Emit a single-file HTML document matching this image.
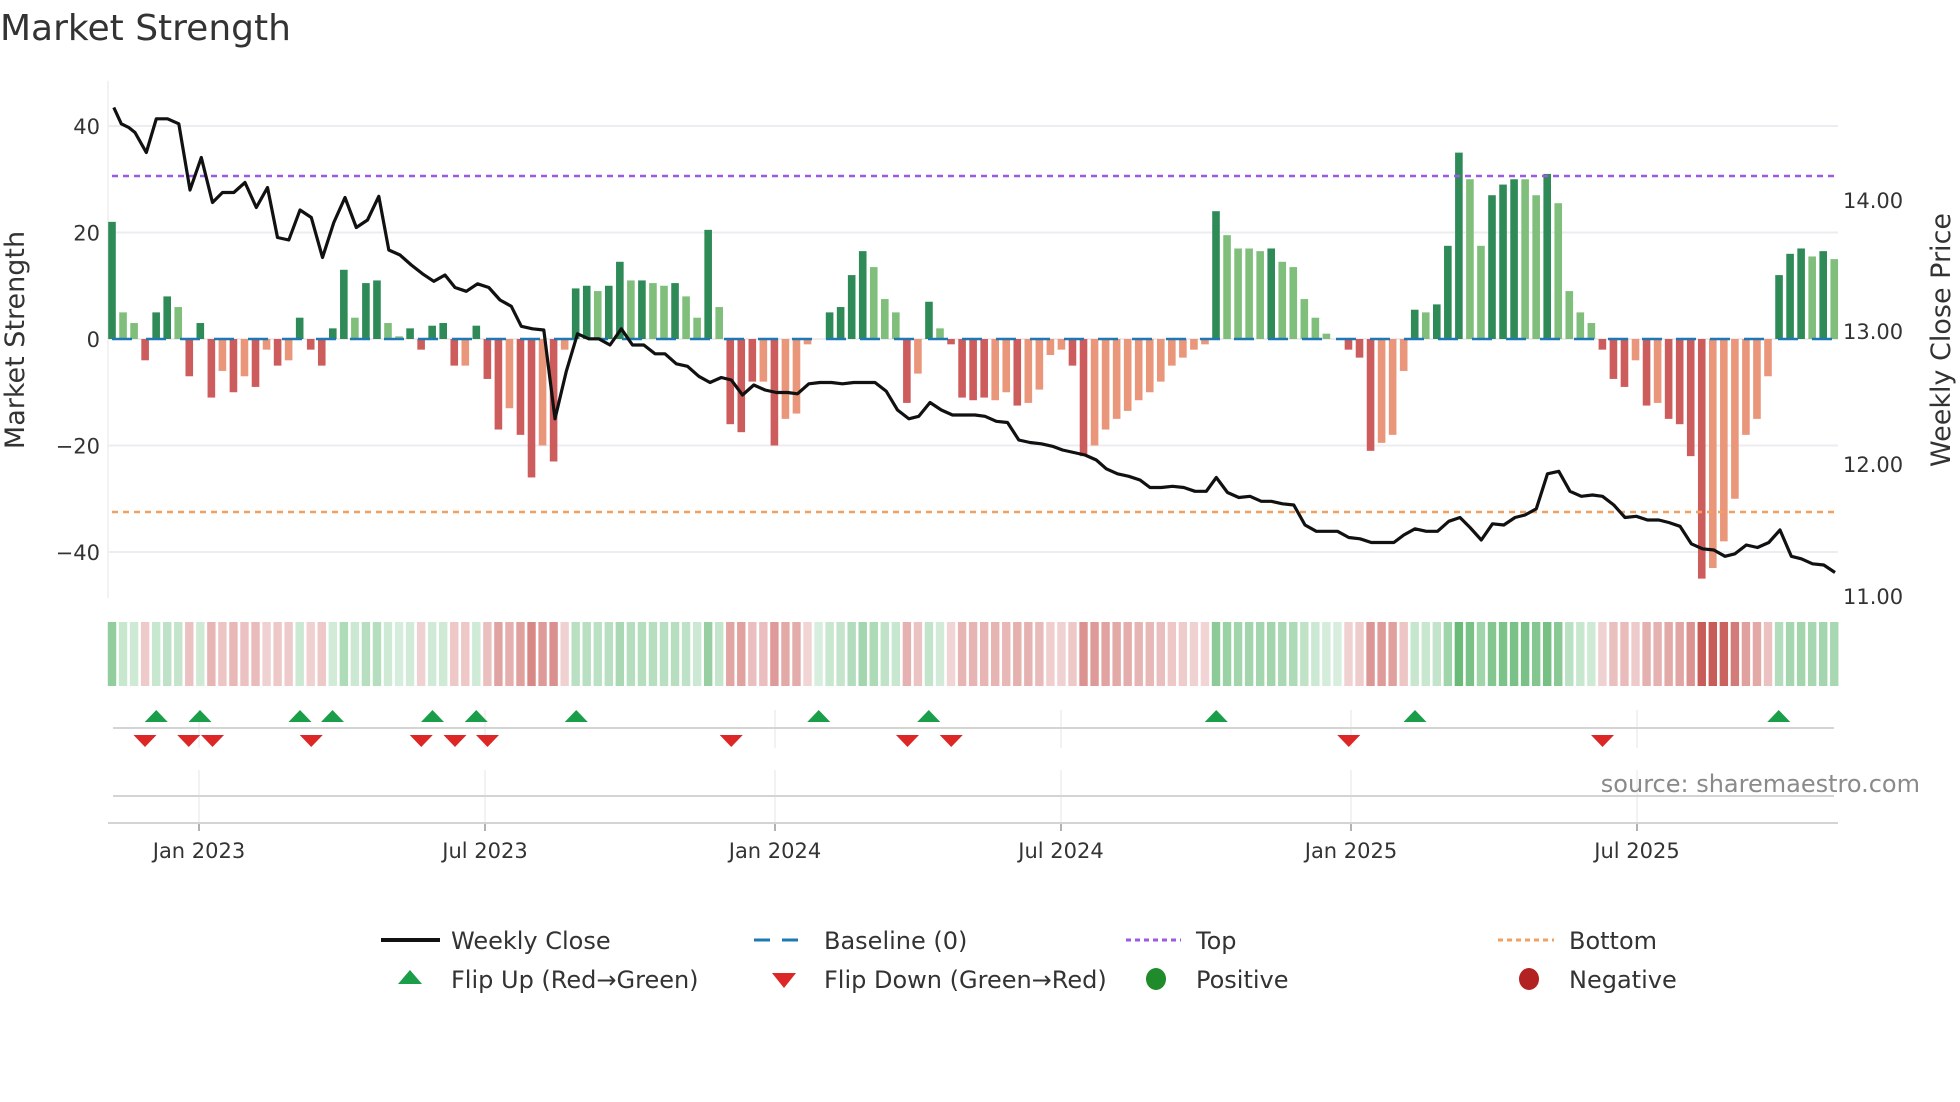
<!DOCTYPE html>
<html><head><meta charset="utf-8"><style>
html,body{margin:0;padding:0;background:#fff;width:1960px;height:1102px;overflow:hidden}
svg{display:block;font-family:"DejaVu Sans","Liberation Sans",sans-serif}
</style></head><body>
<svg id="s" width="1960" height="1102" viewBox="0 0 1960 1102" xmlns="http://www.w3.org/2000/svg">
<text x="0" y="40" font-size="36" fill="#333">Market Strength</text>
<g id="grid"></g>
<g id="bars"></g>
<g id="lines"></g>
<g id="strip"></g>
<g id="marks"></g>
<g id="axes" font-size="21" fill="#333"></g>
<text x="1920" y="792" font-size="24" fill="#8a8a8a" text-anchor="end">source: sharemaestro.com</text>
<g font-size="24" fill="#333">
<line x1="381" y1="940" x2="440" y2="940" stroke="#111" stroke-width="4"/>
<text x="451" y="949">Weekly Close</text>
<line x1="754" y1="940" x2="806" y2="940" stroke="#1f77b4" stroke-width="3" stroke-dasharray="16,12"/>
<text x="824" y="949">Baseline (0)</text>
<line x1="1126" y1="940" x2="1181" y2="940" stroke="#9b59e6" stroke-width="3" stroke-dasharray="5,4"/>
<text x="1196" y="949">Top</text>
<line x1="1498" y1="940" x2="1554" y2="940" stroke="#f0a060" stroke-width="3" stroke-dasharray="5,4"/>
<text x="1569" y="949">Bottom</text>
<polygon points="410,970 398,984 422,984" fill="#1a9e49"/>
<text x="451" y="988">Flip Up (Red→Green)</text>
<polygon points="772,973 796,973 784,988" fill="#dd2727"/>
<text x="824" y="988">Flip Down (Green→Red)</text>
<ellipse cx="1156" cy="979" rx="10" ry="11" fill="#208b2a"/>
<text x="1196" y="988">Positive</text>
<ellipse cx="1529" cy="979" rx="10" ry="11" fill="#b22222"/>
<text x="1569" y="988">Negative</text>
</g>
</svg>
<script>
var NS="http://www.w3.org/2000/svg";
function el(p,t,a,txt){var e=document.createElementNS(NS,t);for(var k in a)e.setAttribute(k,a[k]);if(txt!=null)e.textContent=txt;document.getElementById(p).appendChild(e);return e;}
var vals=[[22,1],[5,0],[3,0],[-4,1],[5,1],[8,1],[6,0],[-7,1],[3,1],[-11,1],[-6,0],[-10,1],[-7,0],[-9,1],[-2,0],[-5,1],[-4,0],[4,1],[-2,1],[-5,1],[2,1],[13,1],[4,0],[10.5,1],[11,1],[3,0],[0.5,0],[2,1],[-2,1],[2.5,1],[3,1],[-5,1],[-5,0],[2.5,1],[-7.5,1],[-17,1],[-13,0],[-18,1],[-26,1],[-20,0],[-23,1],[-2,0],[9.5,1],[10,1],[9,0],[10,1],[14.5,1],[11,0],[11,1],[10.5,0],[10,0],[10.5,1],[8,0],[4,0],[20.5,1],[6,0],[-16,1],[-17.5,1],[-8,1],[-8,0],[-20,1],[-15,0],[-14,0],[-1,0],[0,0],[5,1],[6,1],[12,1],[16.5,1],[13.5,0],[7.5,0],[5,0],[-12,1],[-6.5,0],[7,1],[2,0],[-1,1],[-11,1],[-11.5,1],[-11,1],[-11.5,0],[-10,0],[-12.5,1],[-12,0],[-9.5,0],[-3,0],[-2,0],[-5,1],[-22,1],[-20,0],[-17,0],[-15,0],[-13.5,0],[-11.5,0],[-10,0],[-8,0],[-5,0],[-3.5,0],[-2,0],[-1,0],[24,1],[19.5,0],[17,0],[17,0],[16.5,0],[17,1],[14.5,0],[13.5,0],[7.5,0],[4,0],[1,0],[0,0],[-2,1],[-3.5,1],[-21,1],[-19.5,0],[-18,0],[-6,0],[5.5,1],[5,0],[6.5,1],[17.5,1],[35,1],[30,0],[17.5,0],[27,1],[29,1],[30,1],[30,0],[27,0],[31,1],[25.5,0],[9,0],[5,0],[3,0],[-2,1],[-7.5,1],[-9,1],[-4,0],[-12.5,1],[-12,0],[-15,1],[-16,1],[-22,1],[-45,1],[-43,0],[-38,0],[-30,0],[-18,0],[-15,0],[-7,0],[12,1],[16,1],[17,1],[15.5,0],[16.5,1],[15,0]];
function X(i){return 112+i*11.04;}
function Y(v){return 339-v*5.325;}
[40,20,0,-20,-40].forEach(function(v){el("grid","line",{x1:108,x2:1838,y1:Y(v),y2:Y(v),stroke:"#ececf1","stroke-width":2});
el("axes","text",{x:100,y:Y(v)+8,"text-anchor":"end"},(v<0?"\u2212":"")+Math.abs(v));});
el("grid","line",{x1:108,x2:108,y1:81,y2:598,stroke:"#eeeeee","stroke-width":1.5});
vals.forEach(function(d,i){var v=d[0];if(v==0)return;var c=v>0?(d[1]?"#2e8b57":"#7fbf7b"):(d[1]?"#cd5c5c":"#e9967a");
var y=Math.min(Y(v),Y(0)),h=Math.abs(v*5.325);el("bars","rect",{x:X(i)-3.8,y:y,width:7.6,height:h,fill:c});});
el("lines","line",{x1:112,x2:1838,y1:339,y2:339,stroke:"#1f77b4","stroke-width":2.5,"stroke-dasharray":"20,14"});
el("lines","line",{x1:112,x2:1838,y1:176,y2:176,stroke:"#9b59e6","stroke-width":2.5,"stroke-dasharray":"6,5"});
el("lines","line",{x1:112,x2:1838,y1:512,y2:512,stroke:"#f0a060","stroke-width":2.5,"stroke-dasharray":"6,5"});
var pts=[[91,86],[97,99],[103,102],[108,106],[117,122],[125,95],[134,95],[143,99],[152,152],[161,126],[170,162],[178,154],[187,154],[196,146],[205,166],[214,150],[222,190],[231,192],[240,168],[249,174],[258,206],[267,178],[276,158],[285,182],[294,176],[303,157],[311,200],[320,204],[329,212],[338,219],[347,225],[356,220],[364,230],[373,233],[382,227],[391,230],[400,240],[409,245],[417,261],[426,263],[435,264],[444,335],[453,297],[462,267],[471,271],[479,271],[488,276],[497,263],[506,276],[515,276],[524,283],[532,283],[541,291],[550,293],[559,301],[568,306],[577,302],[585,304],[594,316],[603,308],[612,312],[621,314],[630,314],[638,315],[647,307],[656,306],[665,306],[674,307],[683,306],[691,306],[700,306],[709,313],[718,328],[727,335],[735,333],[744,322],[753,328],[762,332],[771,332],[780,332],[788,333],[797,337],[806,338],[815,352],[824,354],[833,355],[842,357],[850,360],[859,362],[868,364],[877,368],[885,375],[894,379],[903,381],[912,384],[920,390],[929,390],[938,389],[947,390],[956,393],[965,393],[973,382],[982,394],[991,398],[1000,397],[1009,401],[1017,401],[1026,403],[1035,404],[1044,420],[1053,425],[1062,425],[1070,425],[1079,430],[1088,431],[1097,434],[1106,434],[1115,434],[1123,428],[1132,423],[1141,425],[1150,425],[1159,417],[1168,414],[1176,422],[1185,432],[1194,419],[1203,420],[1212,414],[1220,412],[1229,407],[1238,379],[1247,377],[1256,393],[1265,397],[1274,396],[1282,397],[1291,404],[1300,414],[1309,413],[1318,416],[1327,416],[1335,418],[1344,421],[1353,435],[1362,439],[1371,440],[1380,445],[1388,443],[1397,436],[1406,438],[1415,434],[1424,424],[1433,445],[1441,447],[1450,451],[1459,452],[1468,458]];
el("lines","polyline",{points:pts.map(function(p){return (p[0]*1.25).toFixed(1)+","+(p[1]*1.25).toFixed(1);}).join(" "),fill:"none",stroke:"#111","stroke-width":3.2,"stroke-linejoin":"round"});
[["14.00",200],["13.00",331],["12.00",464],["11.00",596]].forEach(function(t){el("axes","text",{x:1843,y:t[1]+8},t[0]);});
el("axes","text",{x:0,y:0,transform:"translate(24,340) rotate(-90)","text-anchor":"middle","font-size":"27"},"Market Strength");
el("axes","text",{x:0,y:0,transform:"translate(1950,340) rotate(-90)","text-anchor":"middle","font-size":"27"},"Weekly Close Price");
vals.forEach(function(d,i){var v=d[0];var a=Math.min(Math.abs(v)/40,1);var c;
if(v>=0){var r=Math.round(215-a*(215-90)),g=Math.round(238-a*(238-178)),b=Math.round(222-a*(222-105));c="rgb("+r+","+g+","+b+")";}
else{var r=Math.round(242-a*(242-200)),g=Math.round(215-a*(215-92)),b=Math.round(215-a*(215-88));c="rgb("+r+","+g+","+b+")";}
el("strip","rect",{x:X(i)-4.2,y:622,width:8.4,height:64,fill:c});});
var ticks=[[199,"Jan 2023"],[485,"Jul 2023"],[775,"Jan 2024"],[1061,"Jul 2024"],[1351,"Jan 2025"],[1637,"Jul 2025"]];
ticks.forEach(function(t){el("marks","line",{x1:t[0],x2:t[0],y1:710,y2:748,stroke:"#eeeeee","stroke-width":1.5});
el("marks","line",{x1:t[0],x2:t[0],y1:770,y2:823,stroke:"#eeeeee","stroke-width":1.5});
el("marks","line",{x1:t[0],x2:t[0],y1:823,y2:831,stroke:"#999","stroke-width":1.5});
el("axes","text",{x:t[0],y:858,"text-anchor":"middle"},t[1]);});
el("marks","line",{x1:113,x2:1834,y1:728,y2:728,stroke:"#d4d4d4","stroke-width":2});
el("marks","line",{x1:113,x2:1834,y1:796,y2:796,stroke:"#d4d4d4","stroke-width":2});
el("marks","line",{x1:108,x2:1838,y1:823,y2:823,stroke:"#d4d4d4","stroke-width":2});
[125,160,240,266,346,381,461,655,743,973,1132,1423].forEach(function(x){x*=1.25;el("marks","polygon",{points:(x)+",710 "+(x-11.5)+",722 "+(x+11.5)+",722",fill:"#1a9e49"});});
[116,151,170,249,337,364,390,585,726,761,1079,1282].forEach(function(x){x*=1.25;el("marks","polygon",{points:(x-11.5)+",735 "+(x+11.5)+",735 "+x+",747",fill:"#dd2727"});});
</script>
</body></html>
